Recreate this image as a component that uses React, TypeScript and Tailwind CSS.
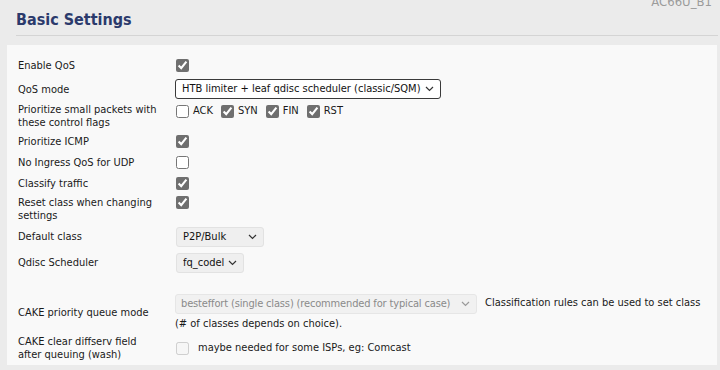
import type { ReactNode } from "react";

type RowProps = Readonly<{
  label: ReactNode;
  children?: ReactNode;
  height: string;
}>;

type SelectBoxProps = Readonly<{
  value: string;
  width: string;
  tone?: "outlined" | "filled" | "disabled";
}>;

function Row({ label, children, height }: RowProps) {
  return (
    <div className={`grid grid-cols-[158px_1fr] items-center ${height}`}>
      <div className="leading-[13px]">{label}</div>
      <div className="flex items-center">{children}</div>
    </div>
  );
}

function Check({ checked = false, disabled = false }: { checked?: boolean; disabled?: boolean }) {
  return (
    <input
      type="checkbox"
      defaultChecked={checked}
      disabled={disabled}
      className="m-0 h-[13px] w-[13px] accent-[#6f6f6f]"
    />
  );
}

function Chevron({ color }: { color: string }) {
  return (
    <svg width="9" height="6" viewBox="0 0 9 6" className="pointer-events-none absolute right-[7px] top-1/2 -translate-y-1/2">
      <path d="M1 1l3.5 3.5L8 1" fill="none" stroke={color} strokeWidth="1.2" />
    </svg>
  );
}

function SelectBox({ value, width, tone = "filled" }: SelectBoxProps) {
  const boxClassName =
    tone === "outlined"
      ? "border border-[#3a3a3a] bg-white text-[#111] pl-[6px]"
      : tone === "disabled"
        ? "border border-[#e6e6e6] bg-[#f1f1f1] text-[#8a8a8a] pl-[5px] tracking-[-0.15px]"
        : "border border-[#e2e2e2] bg-[#efefef] text-[#111] pl-[6px]";

  return (
    <div className={`relative shrink-0 ${width}`}>
      <select
        defaultValue={value}
        disabled={tone === "disabled"}
        className={`h-[20px] w-full appearance-none rounded-[3px] pr-[17px] text-[11px] leading-[18px] outline-none ${boxClassName}`}
      >
        <option>{value}</option>
      </select>
      <Chevron color={tone === "disabled" ? "#9a9a9a" : "#333"} />
    </div>
  );
}

function Flag({ label, checked }: { label: string; checked: boolean }) {
  return (
    <label className="mr-[8px] flex items-center gap-[4px]">
      <Check checked={checked} />
      <span>{label}</span>
    </label>
  );
}

export default function App() {
  return (
    <div
      className="h-[370px] w-[720px] overflow-hidden bg-[#ebebeb] text-[11px] text-[#1a1a1a] font-stretch-condensed"
      style={{ fontFamily: '"DejaVu Sans", Tahoma, sans-serif' }}
    >
      <div className="flex justify-end pr-[8px]">
        <span className="-mt-[5px] text-[13px] leading-[13px] text-[#9b9b9b]">AC66U_B1</span>
      </div>

      <div className="pl-[16px] pr-[2px]">
        <h1 className="mt-[2px] text-[16px] font-bold leading-[20px] text-[#2b3a6c]">
          Basic Settings
        </h1>
        <div className="mt-[5px] h-px bg-[#d4d4d4]" />
      </div>

      <section className="ml-[7px] mr-[3px] mt-[9px] bg-[#f9f9f9] pl-[11px] pt-[8px]">
        <Row label="Enable QoS" height="h-[24px]">
          <Check checked />
        </Row>
        <Row label="QoS mode" height="h-[24px]">
          <div className="-ml-px">
            <SelectBox value="HTB limiter + leaf qdisc scheduler (classic/SQM)" width="w-[266px]" tone="outlined" />
          </div>
        </Row>
        <Row
          label={
            <>
              Prioritize small packets with
              <br />
              these control flags
            </>
          }
          height="h-[29px]"
        >
          <div className="-mt-[9px] flex items-center">
            <Flag label="ACK" checked={false} />
            <Flag label="SYN" checked />
            <Flag label="FIN" checked />
            <Flag label="RST" checked />
          </div>
        </Row>
        <Row label="Prioritize ICMP" height="h-[22px]">
          <Check checked />
        </Row>
        <Row label="No Ingress QoS for UDP" height="h-[21px]">
          <Check />
        </Row>
        <Row label="Classify traffic" height="h-[21px]">
          <Check checked />
        </Row>
        <Row
          label={
            <>
              Reset class when changing
              <br />
              settings
            </>
          }
          height="h-[29px]"
        >
          <div className="-mt-[12px] flex">
            <Check checked />
          </div>
        </Row>
        <Row label="Default class" height="h-[27px]">
          <SelectBox value="P2P/Bulk" width="w-[88px]" />
        </Row>
        <Row label="Qdisc Scheduler" height="h-[25px]">
          <SelectBox value="fq_codel" width="w-[68px]" />
        </Row>
        <div className="h-[18px]" />
        <Row label="CAKE priority queue mode" height="h-[38px]">
          <div className="-ml-px">
            <div className="flex items-center gap-[8px] whitespace-nowrap">
              <SelectBox value="besteffort (single class) (recommended for typical case)" width="w-[302px]" tone="disabled" />
              <span>Classification rules can be used to set class</span>
            </div>
            <p className="mt-[3px] leading-[14px]">(# of classes depends on choice).</p>
          </div>
        </Row>
        <Row
          label={
            <>
              CAKE clear diffserv field
              <br />
              after queuing (wash)
            </>
          }
          height="h-[34px]"
        >
          <label className="flex items-center gap-[9px]">
            <Check disabled />
            <span>maybe needed for some ISPs, eg: Comcast</span>
          </label>
        </Row>
      </section>
    </div>
  );
}
